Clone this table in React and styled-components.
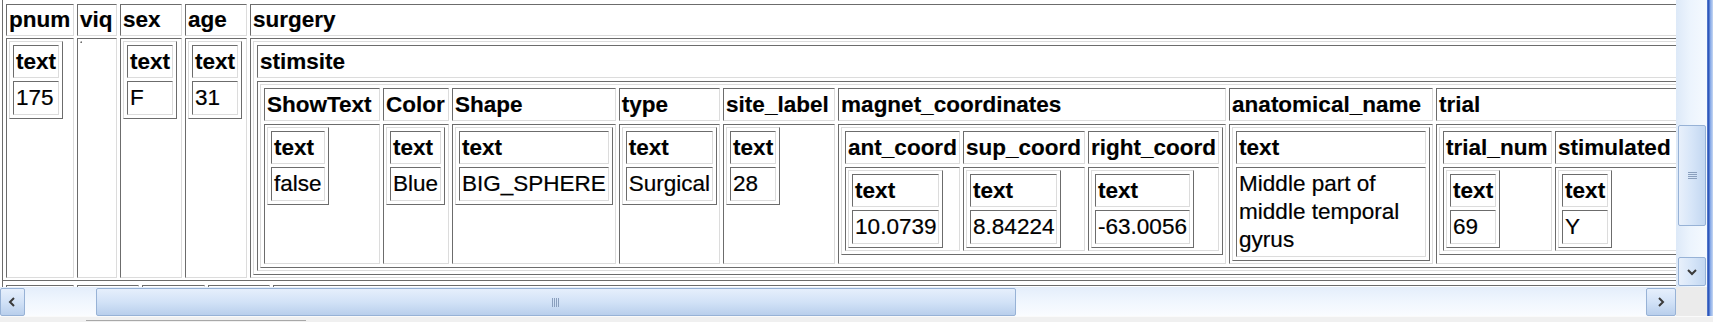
import React from "react";
import styled, { createGlobalStyle } from "styled-components";

const DARK = "#6c6c6c";
const LIGHT = "#dcdcdc";
const FONT = `"Liberation Sans", Arial, sans-serif`;

const GlobalStyle = createGlobalStyle`
  html, body {
    margin: 0;
    padding: 0;
    background: #fff;
    overflow: hidden;
  }
  body {
    font-family: ${FONT};
    color: #000;
  }
`;

/** window frame: page area, scrollbars, edge, status strip */
const Window = styled.div`
  display: grid;
  grid-template-columns: 1676px 31px 6px;
  grid-template-rows: 287px 29px 6px;
  width: 1713px;
  height: 322px;
  overflow: hidden;
`;

const Viewport = styled.div`
  grid-column: 1;
  grid-row: 1;
  overflow: hidden;
  padding-left: 2px;
  background: #fff;
`;

const Sheet = styled.div`
  width: max-content;
`;

// top level record table, plain grey frame (top edge scrolled away)
const Record = styled.table`
  border: 1px solid ${DARK};
  border-top: none;
  padding-top: 2px;
  border-spacing: 3px 2px;
`;

// nested tables, raised look
const Nested = styled.table`
  border: 1px solid;
  border-color: ${LIGHT} ${DARK} ${DARK} ${LIGHT};
  border-spacing: 3px;
  width: ${(p) => (p.$full ? "100%" : "auto")};
`;

const Head = styled.th`
  box-sizing: border-box;
  width: ${(p) => (p.$w ? `${p.$w}px` : "auto")};
  padding: 2px;
  border: 1px solid;
  border-color: ${DARK} ${LIGHT} ${LIGHT} ${DARK};
  font: bold 22.5px/27px ${FONT};
  -webkit-text-stroke: 0.15px #000;
  text-align: left;
  vertical-align: top;
  white-space: nowrap;
`;

const RecordHead = styled(Head)`
  line-height: 26px;
`;

const Cell = styled.td`
  box-sizing: border-box;
  width: ${(p) => (p.$w ? `${p.$w}px` : "auto")};
  padding: 2px;
  border: 1px solid;
  border-color: ${DARK} ${LIGHT} ${LIGHT} ${DARK};
  font: 22.5px/28px ${FONT};
  -webkit-text-stroke: 0.2px #000;
  text-align: left;
  vertical-align: top;
  white-space: ${(p) => (p.$wrap ? "normal" : "nowrap")};
`;

/** scrollbars */
const VBar = styled.div`
  grid-column: 2;
  grid-row: 1;
  display: flex;
  flex-direction: column;
  padding: 0 1px 1px 2px;
  background: linear-gradient(to right, #dde9f8, #ecf4fd 45%, #f5f9fe);
`;

const HBar = styled.div`
  grid-column: 1;
  grid-row: 2;
  display: flex;
  padding-top: 1px;
  background: linear-gradient(to bottom, #e4eefb, #f0f6fe 50%, #fafcff);
`;

const Thumb = styled.div`
  box-sizing: border-box;
  display: flex;
  align-items: center;
  justify-content: center;
  border: 1px solid #97b2d6;
  border-radius: 2px;
  background: ${(p) =>
    p.$vertical
      ? "linear-gradient(to right, #e8f0fb, #d6e5f8 50%, #c3d7f1)"
      : "linear-gradient(to bottom, #e6effc, #d2e2f7 50%, #b9cfec)"};
  margin-top: ${(p) => (p.$top ? `${p.$top}px` : "0")};
  margin-left: ${(p) => (p.$left ? `${p.$left}px` : "0")};
  height: ${(p) => (p.$h ? `${p.$h}px` : "auto")};
  width: ${(p) => (p.$w ? `${p.$w}px` : "auto")};
`;

const ArrowButton = styled(Thumb)`
  flex: none;
  ${(p) => (p.$end ? "margin-left: auto;" : "")}
  ${(p) => (p.$bottom ? "margin-top: auto;" : "")}
`;

const Corner = styled.div`
  grid-column: 2;
  grid-row: 2;
  background: #ebebeb;
`;

const Edge = styled.div`
  grid-column: 3;
  grid-row: 1 / 3;
  background: linear-gradient(
    to right,
    #6f93d8 0,
    #2f57bb 1px,
    #2f57bb 2px,
    #7fa3e4 3px,
    #c6d8f4 100%
  );
`;

const StatusStrip = styled.div`
  grid-column: 1 / 4;
  grid-row: 3;
  background: #f0f0f0;
  border-top: 1px solid #fafafa;
`;

const StatusPanel = styled.div`
  margin: 3px 0 0 86px;
  width: 220px;
  border-top: 1px solid #a8a8a8;
`;

function Chevron({ dir }) {
  const pts = {
    left: "6,1 2,5 6,9",
    right: "3,1 7,5 3,9",
    down: "1,3 5,7 9,3",
  }[dir];
  return (
    <svg width="10" height="10" viewBox="0 0 10 10">
      <polyline points={pts} fill="none" stroke="#3a3a3a" strokeWidth="2" />
    </svg>
  );
}

function Grip({ vertical }) {
  return vertical ? (
    <svg width="9" height="8" viewBox="0 0 9 8">
      {[0.5, 2.5, 4.5, 6.5].map((y) => (
        <line key={y} x1="0" x2="9" y1={y} y2={y} stroke="#8a9fbd" />
      ))}
    </svg>
  ) : (
    <svg width="8" height="9" viewBox="0 0 8 9">
      {[0.5, 2.5, 4.5, 6.5].map((x) => (
        <line key={x} y1="0" y2="9" x1={x} x2={x} stroke="#8a9fbd" />
      ))}
    </svg>
  );
}

// a "text" element with its value
function Field({ value, wide }) {
  return (
    <Nested $full={wide}>
      <tbody>
        <tr>
          <Head>text</Head>
        </tr>
        <tr>
          <Cell $wrap={wide}>{value}</Cell>
        </tr>
      </tbody>
    </Nested>
  );
}

function Group({ heads, children }) {
  return (
    <Nested>
      <tbody>
        <tr>
          {heads.map(([label, w]) => (
            <Head key={label} $w={w}>
              {label}
            </Head>
          ))}
        </tr>
        <tr>{children}</tr>
      </tbody>
    </Nested>
  );
}

const siteHeads = [
  ["ShowText", 116],
  ["Color", 66],
  ["Shape", 163],
  ["type", 101],
  ["site_label", 112],
  ["magnet_coordinates", 388],
  ["anatomical_name", 204],
  ["trial"],
];

function StimSite() {
  return (
    <Nested>
      <tbody>
        <tr>
          <Head>stimsite</Head>
        </tr>
        <tr>
          <Cell>
            <Group heads={siteHeads}>
              <Cell>
                <Field value="false" />
              </Cell>
              <Cell>
                <Field value="Blue" />
              </Cell>
              <Cell>
                <Field value="BIG_SPHERE" />
              </Cell>
              <Cell>
                <Field value="Surgical" />
              </Cell>
              <Cell>
                <Field value="28" />
              </Cell>
              <Cell>
                <Group
                  heads={[
                    ["ant_coord", 115],
                    ["sup_coord", 122],
                    ["right_coord", 131],
                  ]}
                >
                  <Cell>
                    <Field value="10.0739" />
                  </Cell>
                  <Cell>
                    <Field value="8.84224" />
                  </Cell>
                  <Cell>
                    <Field value="-63.0056" />
                  </Cell>
                </Group>
              </Cell>
              <Cell>
                <Field wide value="Middle part of middle temporal gyrus" />
              </Cell>
              <Cell>
                <Group
                  heads={[
                    ["trial_num", 109],
                    ["stimulated", 122],
                  ]}
                >
                  <Cell>
                    <Field value="69" />
                  </Cell>
                  <Cell>
                    <Field value="Y" />
                  </Cell>
                </Group>
              </Cell>
            </Group>
          </Cell>
        </tr>
      </tbody>
    </Nested>
  );
}

const labels = ["pnum", "viq", "sex", "age", "surgery"];

function PatientRecord({ widths, values }) {
  return (
    <Record>
      <tbody>
        <tr>
          {labels.map((l, i) => (
            <RecordHead key={l} $w={widths[i]}>
              {l}
            </RecordHead>
          ))}
        </tr>
        <tr>
          {values.map((v, i) => (
            <Cell key={i}>{v ? <Field value={v} /> : <Nested />}</Cell>
          ))}
          <Cell>
            <StimSite />
          </Cell>
        </tr>
      </tbody>
    </Record>
  );
}

// next record, only its top edge is inside the view
function NextRecord({ widths }) {
  return (
    <Record>
      <tbody>
        <tr>
          {widths.map((w, i) => (
            <RecordHead key={i} $w={w} />
          ))}
          <RecordHead $w={1420} />
        </tr>
      </tbody>
    </Record>
  );
}

export default function App() {
  return (
    <>
      <GlobalStyle />
      <Window>
        <Viewport>
          <Sheet>
            <PatientRecord widths={[68, 40, 62, 62]} values={["175", null, "F", "31"]} />
            <NextRecord widths={[68, 62, 63, 62]} />
          </Sheet>
        </Viewport>

        <VBar>
          <Thumb $vertical $top={125} $h={101}>
            <Grip vertical />
          </Thumb>
          <ArrowButton $vertical $bottom $h={29}>
            <Chevron dir="down" />
          </ArrowButton>
        </VBar>

        <HBar>
          <ArrowButton $w={25}>
            <Chevron dir="left" />
          </ArrowButton>
          <Thumb $left={71} $w={920}>
            <Grip />
          </Thumb>
          <ArrowButton $end $w={30}>
            <Chevron dir="right" />
          </ArrowButton>
        </HBar>

        <Corner />
        <Edge />
        <StatusStrip>
          <StatusPanel />
        </StatusStrip>
      </Window>
    </>
  );
}
